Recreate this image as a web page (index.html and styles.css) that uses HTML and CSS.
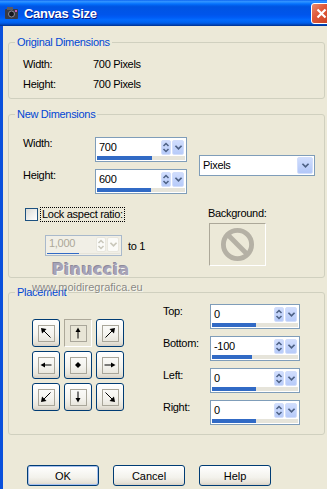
FILE: index.html
```html
<!DOCTYPE html>
<html lang="en">
<head>
	<meta charset="UTF-8">
	<title>Canvas Size</title>
	<link rel="stylesheet" href="styles.css">
</head>
<body>
<div class="window">
	<div class="titlebar">
		<svg class="app-icon" viewBox="0 0 16 16">
			<rect x="1" y="4" width="13" height="10" rx="1" fill="#3b3b44"/>
			<rect x="3" y="2" width="6" height="3" fill="#5a5a63"/>
			<circle cx="7.5" cy="9" r="3" fill="#17171d" stroke="#8d8d9c"/>
			<rect x="11" y="5" width="2" height="2" fill="#c25db2"/>
		</svg>
		<span class="title">Canvas Size</span>
		<span class="close-btn">
			<svg viewBox="0 0 19 19"><path d="M5.5 5.5l8 8M13.5 5.5l-8 8" stroke="#fff" stroke-width="2.2"/></svg>
		</span>
	</div>

	<div class="client">
		<fieldset class="group">
			<legend>Original Dimensions</legend>
			<div class="orig">
				<div class="orig-row"><span class="orig-label">Width:</span><span>700 Pixels</span></div>
				<div class="orig-row"><span class="orig-label">Height:</span><span>700 Pixels</span></div>
			</div>
		</fieldset>

		<fieldset class="group group-new">
			<legend>New Dimensions</legend>
			<div class="dims">
				<div class="dim-fields">
					<div class="field-row">
						<span class="field-label">Width:</span>
						<div class="spin">
							<div class="spin-top">
								<span class="spin-val">700</span>
								<span class="spin-ud"><svg viewBox="0 0 8 13"><path d="M1.5 5L4 2.5 6.5 5M1.5 8L4 10.5 6.5 8" fill="none" stroke="#4d6185" stroke-width="1.5"/></svg></span>
								<span class="spin-dd"><svg viewBox="0 0 10 8"><path d="M1.5 2L5 5.5 8.5 2" fill="none" stroke="#4d6185" stroke-width="2"/></svg></span>
							</div>
							<div class="spin-bar"><div class="spin-fill" style="width: 62%"></div></div>
						</div>
					</div>
					<div class="field-row">
						<span class="field-label">Height:</span>
						<div class="spin">
							<div class="spin-top">
								<span class="spin-val">600</span>
								<span class="spin-ud"><svg viewBox="0 0 8 13"><path d="M1.5 5L4 2.5 6.5 5M1.5 8L4 10.5 6.5 8" fill="none" stroke="#4d6185" stroke-width="1.5"/></svg></span>
								<span class="spin-dd"><svg viewBox="0 0 10 8"><path d="M1.5 2L5 5.5 8.5 2" fill="none" stroke="#4d6185" stroke-width="2"/></svg></span>
							</div>
							<div class="spin-bar"><div class="spin-fill" style="width: 61%"></div></div>
						</div>
					</div>
				</div>
				<div class="combo">
					<span class="combo-val">Pixels</span>
					<span class="combo-btn"><svg viewBox="0 0 10 8"><path d="M1.5 2L5 5.5 8.5 2" fill="none" stroke="#4d6185" stroke-width="2"/></svg></span>
				</div>
			</div>

			<div class="lock">
				<div class="lock-left">
					<div class="check-row">
						<span class="checkbox"></span>
						<span class="check-label">Lock aspect ratio:</span>
					</div>
					<div class="ratio-row">
						<div class="spin spin-off">
							<div class="spin-top">
								<span class="spin-val">1,000</span>
								<span class="spin-ud"><svg viewBox="0 0 8 13"><path d="M1.5 5L4 2.5 6.5 5M1.5 8L4 10.5 6.5 8" fill="none" stroke="#c9c7ba" stroke-width="1.5"/></svg></span>
								<span class="spin-dd"><svg viewBox="0 0 10 8"><path d="M1.5 2L5 5.5 8.5 2" fill="none" stroke="#c9c7ba" stroke-width="2"/></svg></span>
							</div>
							<div class="spin-bar"><div class="spin-fill" style="width: 44%"></div></div>
						</div>
						<span class="ratio-to">to 1</span>
					</div>
				</div>
				<div class="bg-col">
					<span>Background:</span>
					<div class="bg-box">
						<svg viewBox="0 0 36 36"><circle cx="18" cy="18" r="14.5" fill="none" stroke="#b5b1a5" stroke-width="5"/><path d="M8 8l20 20" stroke="#b5b1a5" stroke-width="5"/></svg>
					</div>
				</div>
			</div>
		</fieldset>

		<fieldset class="group group-place">
			<legend>Placement</legend>
			<div class="place">
				<div class="pos-grid">
					<span class="pos"><span class="pos-ico"><svg viewBox="0 0 12 12"><path d="M10.5 10.5L3 3" stroke="#000"/><path d="M1 1L6.5 2 2 6.5z"/></svg></span></span>
					<span class="pos pos-on"><span class="pos-ico"><svg viewBox="0 0 12 12"><path d="M6 11.5V3" stroke="#000"/><path d="M6 .5L3.5 5h5z"/></svg></span></span>
					<span class="pos"><span class="pos-ico"><svg viewBox="0 0 12 12"><path d="M1.5 10.5L9 3" stroke="#000"/><path d="M11 1L5.5 2 10 6.5z"/></svg></span></span>
					<span class="pos"><span class="pos-ico"><svg viewBox="0 0 12 12"><path d="M11.5 6H3" stroke="#000"/><path d="M.5 6L5 3.5v5z"/></svg></span></span>
					<span class="pos"><span class="pos-ico"><svg viewBox="0 0 12 12"><path d="M6 3l3 3-3 3-3-3z"/></svg></span></span>
					<span class="pos"><span class="pos-ico"><svg viewBox="0 0 12 12"><path d="M.5 6H9" stroke="#000"/><path d="M11.5 6L7 3.5v5z"/></svg></span></span>
					<span class="pos"><span class="pos-ico"><svg viewBox="0 0 12 12"><path d="M10.5 1.5L3 9" stroke="#000"/><path d="M1 11l1-5.5 4.5 4.5z"/></svg></span></span>
					<span class="pos"><span class="pos-ico"><svg viewBox="0 0 12 12"><path d="M6 .5V9" stroke="#000"/><path d="M6 11.5L3.5 7h5z"/></svg></span></span>
					<span class="pos"><span class="pos-ico"><svg viewBox="0 0 12 12"><path d="M1.5 1.5L9 9" stroke="#000"/><path d="M11 11l-5.5-1 4.5-4.5z"/></svg></span></span>
				</div>
				<div class="offsets">
					<div class="field-row">
						<span class="field-label">Top:</span>
						<div class="spin spin-sm">
							<div class="spin-top">
								<span class="spin-val">0</span>
								<span class="spin-ud"><svg viewBox="0 0 8 13"><path d="M1.5 5L4 2.5 6.5 5M1.5 8L4 10.5 6.5 8" fill="none" stroke="#4d6185" stroke-width="1.5"/></svg></span>
								<span class="spin-dd"><svg viewBox="0 0 10 8"><path d="M1.5 2L5 5.5 8.5 2" fill="none" stroke="#4d6185" stroke-width="2"/></svg></span>
							</div>
							<div class="spin-bar"><div class="spin-fill" style="width: 51%"></div></div>
						</div>
					</div>
					<div class="field-row">
						<span class="field-label">Bottom:</span>
						<div class="spin spin-sm">
							<div class="spin-top">
								<span class="spin-val">-100</span>
								<span class="spin-ud"><svg viewBox="0 0 8 13"><path d="M1.5 5L4 2.5 6.5 5M1.5 8L4 10.5 6.5 8" fill="none" stroke="#4d6185" stroke-width="1.5"/></svg></span>
								<span class="spin-dd"><svg viewBox="0 0 10 8"><path d="M1.5 2L5 5.5 8.5 2" fill="none" stroke="#4d6185" stroke-width="2"/></svg></span>
							</div>
							<div class="spin-bar"><div class="spin-fill" style="width: 47%"></div></div>
						</div>
					</div>
					<div class="field-row">
						<span class="field-label">Left:</span>
						<div class="spin spin-sm">
							<div class="spin-top">
								<span class="spin-val">0</span>
								<span class="spin-ud"><svg viewBox="0 0 8 13"><path d="M1.5 5L4 2.5 6.5 5M1.5 8L4 10.5 6.5 8" fill="none" stroke="#4d6185" stroke-width="1.5"/></svg></span>
								<span class="spin-dd"><svg viewBox="0 0 10 8"><path d="M1.5 2L5 5.5 8.5 2" fill="none" stroke="#4d6185" stroke-width="2"/></svg></span>
							</div>
							<div class="spin-bar"><div class="spin-fill" style="width: 51%"></div></div>
						</div>
					</div>
					<div class="field-row">
						<span class="field-label">Right:</span>
						<div class="spin spin-sm">
							<div class="spin-top">
								<span class="spin-val">0</span>
								<span class="spin-ud"><svg viewBox="0 0 8 13"><path d="M1.5 5L4 2.5 6.5 5M1.5 8L4 10.5 6.5 8" fill="none" stroke="#4d6185" stroke-width="1.5"/></svg></span>
								<span class="spin-dd"><svg viewBox="0 0 10 8"><path d="M1.5 2L5 5.5 8.5 2" fill="none" stroke="#4d6185" stroke-width="2"/></svg></span>
							</div>
							<div class="spin-bar"><div class="spin-fill" style="width: 51%"></div></div>
						</div>
					</div>
				</div>
			</div>
		</fieldset>

		<div class="actions">
			<button class="btn btn-default">OK</button>
			<button class="btn">Cancel</button>
			<button class="btn">Help</button>
		</div>
	</div>

	<!-- watermark over the dialog -->
	<span class="wm-name">Pinuccia</span>
	<span class="wm-site">www.moidiregrafica.eu</span>
</div>
</body>
</html>
```

FILE: styles.css
```css
html,
body {
	margin: 0;
	padding: 0;
	overflow: hidden;
	background: #ece9d8;
}
body {
	font-family: "Liberation Sans", Arial, sans-serif;
	font-size: 11px;
	letter-spacing: -0.3px;
	color: #000;
}
.window {
	position: relative;
	width: 333px;
}

/* title bar */
.titlebar {
	height: 26px;
	display: flex;
	align-items: center;
	color: #fff;
	background: linear-gradient(to bottom, #0058ee 0%, #3593ff 4%, #288eff 8%, #127dff 12%, #036ffc 16%, #0262ee 20%, #0057e5 24%, #0054e3 28%, #0055eb 56%, #005bf5 66%, #026afe 76%, #0062ef 86%, #0052d6 92%, #0040ab 96%, #003092 100%);
}
.app-icon {
	width: 16px;
	height: 16px;
	margin: 0 4px 0 4px;
}
.title {
	flex: 1;
	font-weight: bold;
	font-size: 13px;
	text-shadow: 1px 1px 0 #0a1883;
}
.close-btn {
	width: 21px;
	height: 21px;
	box-sizing: border-box;
	margin: 1px 1px 0 0;
	border: 1px solid #fff;
	border-radius: 3px;
	background: linear-gradient(135deg, #e98b6e 0%, #e0593a 40%, #c8401f 100%);
	display: flex;
}
.close-btn svg {
	width: 19px;
	height: 19px;
}

.client {
	border-left: 3px solid #0a50dc;
	border-right: 3px solid #0a50dc;
	padding-top: 10px;
	height: 470px;
}

/* group boxes */
.group {
	margin: 0 5px;
	padding: 0;
	border: 1px solid #d0d0bf;
	border-radius: 3px;
	min-width: 0;
}
.group legend {
	margin-left: 6px;
	padding: 0 2px;
	line-height: 12px;
	color: #0046d5;
}
.group-new {
	margin-top: 9px;
}
.group-place {
	margin-top: 8px;
}

.orig {
	padding: 6px 0 4px 14px;
}
.orig-row {
	display: flex;
	line-height: 20px;
}
.orig-label {
	width: 70px;
}

/* new dimensions */
.dims {
	display: flex;
	align-items: center;
	padding: 17px 0 0 14px;
}
.dim-fields {
	display: flex;
	flex-direction: column;
	gap: 7px;
}
.field-row {
	display: flex;
	align-items: flex-start;
	line-height: 13px;
}
.field-label {
	width: 72px;
}

.spin {
	width: 92px;
	height: 25px;
	box-sizing: border-box;
	border: 1px solid #7f9db9;
	background: #fff;
	display: flex;
	flex-direction: column;
}
.spin-top {
	flex: 1;
	display: flex;
	align-items: stretch;
	padding: 2px 2px 1px 3px;
	line-height: 15px;
}
.spin-val {
	flex: 1;
}
.spin-ud,
.spin-dd {
	box-sizing: border-box;
	border: 1px solid #d2defb;
	border-radius: 2px;
	background: linear-gradient(to bottom, #d0ddfd, #b7cbf9);
	display: flex;
	align-items: center;
	justify-content: center;
}
.spin-ud {
	width: 10px;
}
.spin-ud svg {
	width: 8px;
	height: 13px;
}
.spin-dd {
	width: 12px;
	margin-left: 1px;
}
.spin-dd svg {
	width: 9px;
	height: 7px;
}
.spin-bar {
	height: 4px;
	margin: 0 1px 1px;
	background: #e6e4da;
}
.spin-fill {
	height: 100%;
	background: #316ac5;
}

.combo {
	width: 116px;
	height: 21px;
	box-sizing: border-box;
	margin-left: 12px;
	border: 1px solid #7f9db9;
	background: #fff;
	display: flex;
	align-items: stretch;
	padding: 1px;
	line-height: 17px;
}
.combo-val {
	flex: 1;
	padding-left: 2px;
}
.combo-btn {
	width: 16px;
	box-sizing: border-box;
	border: 1px solid #d2defb;
	border-radius: 2px;
	background: linear-gradient(to bottom, #d0ddfd, #b2c7f8);
	display: flex;
	align-items: center;
	justify-content: center;
}
.combo-btn svg {
	width: 9px;
	height: 7px;
}

/* lock aspect + background */
.lock {
	display: flex;
	margin-top: 13px;
	padding: 0 0 11px 14px;
}
.lock-left {
	width: 185px;
}
.check-row {
	display: flex;
	align-items: center;
	height: 14px;
}
.checkbox {
	width: 13px;
	height: 13px;
	box-sizing: border-box;
	margin-left: 2px;
	border: 1px solid #1c5180;
	background: linear-gradient(135deg, #dcdcd7, #fff);
}
.check-label {
	margin-left: 3px;
	padding: 0 1px;
	line-height: 13px;
	outline: 1px dotted #000;
}
.ratio-row {
	display: flex;
	align-items: center;
	margin: 14px 0 0 22px;
}
.spin-off {
	width: 77px;
	height: 21px;
	border-color: #a9b9cb;
	background: #f1efe6;
	color: #aca899;
}
.spin-off .spin-top {
	padding-top: 1px;
	line-height: 13px;
}
.spin-off .spin-ud,
.spin-off .spin-dd {
	background: #fbfbf8;
	border-color: #e9e7de;
}
.ratio-to {
	margin-left: 6px;
}
.bg-col {
	display: flex;
	flex-direction: column;
	line-height: 13px;
}
.bg-box {
	width: 57px;
	height: 43px;
	box-sizing: border-box;
	margin: 3px 0 0 1px;
	border: 1px solid #fff;
	border-top-color: #aca899;
	border-left-color: #aca899;
	display: flex;
	align-items: center;
	justify-content: center;
}
.bg-box svg {
	width: 35px;
	height: 35px;
}

/* placement */
.place {
	display: flex;
	padding: 6px 0 9px 23px;
}
.pos-grid {
	display: grid;
	grid-template-columns: repeat(3, 28px);
	grid-auto-rows: 28px;
	gap: 4px;
	margin-top: 15px;
	align-self: flex-start;
}
.pos {
	box-sizing: border-box;
	border: 1px solid #003c74;
	border-radius: 3px;
	background: linear-gradient(to bottom, #fff 0%, #f4f3ee 55%, #e7e4da 85%, #d6d0c5 100%);
	display: flex;
	align-items: center;
	justify-content: center;
}
.pos-on {
	border-radius: 0;
	border-color: #aca899 #fff #fff #aca899;
	background: #e8e5d6;
}
.pos-ico {
	width: 17px;
	height: 17px;
	box-sizing: border-box;
	border: 1px solid #a9a69a;
	display: flex;
	align-items: center;
	justify-content: center;
}
.pos-ico svg {
	width: 12px;
	height: 12px;
}
.offsets {
	display: flex;
	flex-direction: column;
	gap: 7px;
	margin-left: 39px;
}
.offsets .field-label {
	width: 47px;
	margin-top: 1px;
}
.spin-sm {
	width: 90px;
}

/* dialog buttons */
.actions {
	display: flex;
	gap: 14px;
	margin-top: 30px;
	padding-left: 24px;
}
.btn {
	width: 72px;
	height: 21px;
	box-sizing: border-box;
	padding: 0;
	border: 1px solid #003c74;
	border-radius: 3px;
	background: linear-gradient(to bottom, #fff 0%, #f3f2ec 60%, #e6e2d8 88%, #d6d0c5 100%);
	font: inherit;
	color: #000;
}
.btn-default {
	box-shadow: inset 0 0 0 1px #a6c0ee;
}

/* watermark */
.wm-name {
	position: absolute;
	left: 52px;
	top: 260px;
	font-family: "DejaVu Sans", sans-serif;
	font-weight: bold;
	font-size: 16px;
	letter-spacing: 0.3px;
	color: #a6a3b7;
	text-shadow: 1px 1px 0 #f7f6f0, -1px -1px 0 #8c8a9c;
}
.wm-site {
	position: absolute;
	left: 32px;
	top: 281px;
	font-size: 11px;
	letter-spacing: 0;
	color: rgba(100, 100, 100, 0.75);
	text-shadow: 1px 1px 0 rgba(255, 255, 255, 0.6);
}
```
